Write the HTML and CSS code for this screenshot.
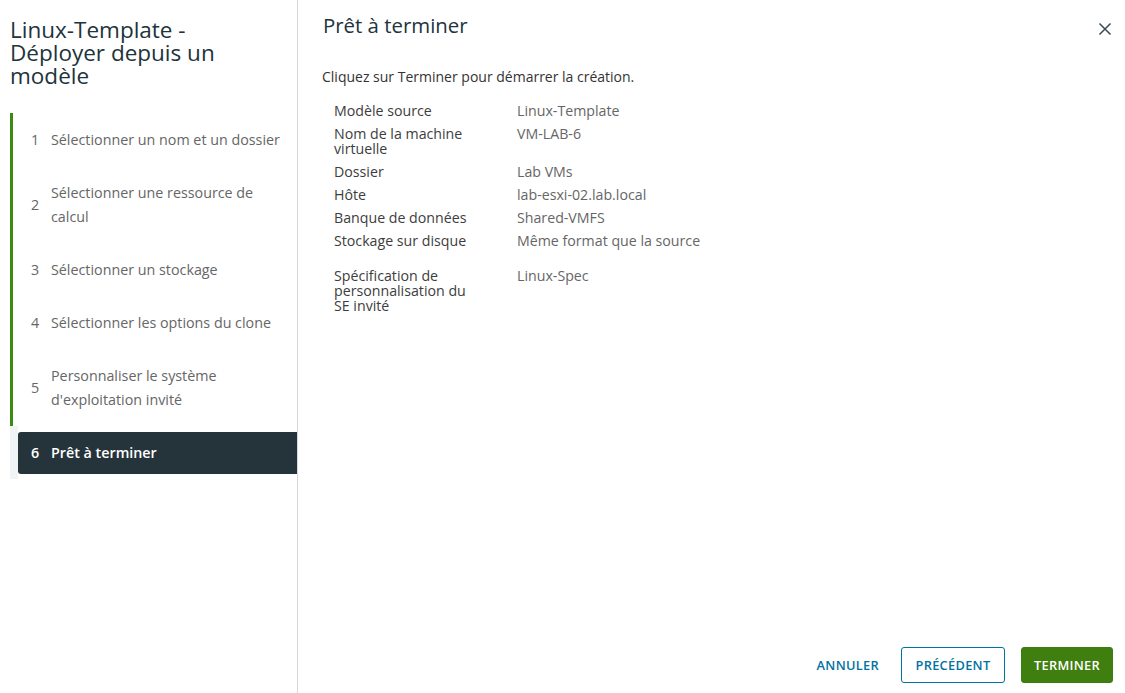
FILE: index.html
```html
<!DOCTYPE html>
<html lang="fr">
<head>
<meta charset="utf-8">
<title>Linux-Template - Déployer depuis un modèle</title>
<link rel="stylesheet" href="styles.css">
</head>
<body>
<div class="wizard">
  <aside class="sidebar">
    <h1 class="wiz-title">Linux-Template - Déployer depuis un modèle</h1>
    <ol class="steps">
      <li class="step done"><span class="num">1</span><span class="label">Sélectionner un nom et un dossier</span></li>
      <li class="step done"><span class="num">2</span><span class="label">Sélectionner une ressource de calcul</span></li>
      <li class="step done"><span class="num">3</span><span class="label">Sélectionner un stockage</span></li>
      <li class="step done"><span class="num">4</span><span class="label">Sélectionner les options du clone</span></li>
      <li class="step done"><span class="num">5</span><span class="label">Personnaliser le système d'exploitation invité</span></li>
      <li class="step current"><div class="current-box"><span class="num">6</span><span class="label">Prêt à terminer</span></div></li>
    </ol>
  </aside>
  <main class="content">
    <header class="content-head">
      <h2 class="page-title">Prêt à terminer</h2>
      <button class="close" aria-label="Fermer">
        <svg width="14" height="14" viewBox="0 0 14 14"><path d="M1.5 1.5 L12.5 12.5 M12.5 1.5 L1.5 12.5" stroke="#3a4a52" stroke-width="1.5" fill="none"/></svg>
      </button>
    </header>
    <p class="intro">Cliquez sur Terminer pour démarrer la création.</p>
    <dl class="summary">
      <dt>Modèle source</dt><dd>Linux-Template</dd>
      <dt>Nom de la machine virtuelle</dt><dd>VM-LAB-6</dd>
      <dt>Dossier</dt><dd>Lab VMs</dd>
      <dt>Hôte</dt><dd>lab-esxi-02.lab.local</dd>
      <dt>Banque de données</dt><dd>Shared-VMFS</dd>
      <dt>Stockage sur disque</dt><dd>Même format que la source</dd>
      <dt class="gap">Spécification de personnalisation du SE invité</dt><dd class="gap">Linux-Spec</dd>
    </dl>
    <footer class="actions">
      <button class="btn btn-link">ANNULER</button>
      <button class="btn btn-outline">PRÉCÉDENT</button>
      <button class="btn btn-primary">TERMINER</button>
    </footer>
  </main>
</div>
</body>
</html>
```
FILE: styles.css
```css
* { box-sizing: border-box; }
html, body { margin: 0; padding: 0; height: 100%; background: #fff; }
body { font-family: "Open Sans", "Noto Sans", sans-serif; color: #565656; }

.wizard { display: flex; height: 693px; }

.sidebar {
  width: 298px;
  flex: none;
  border-right: 1px solid #d7d7d7;
  padding: 18px 0 0 10px;
}
.wiz-title {
  margin: 0;
  font-weight: 400;
  font-size: 22.5px;
  line-height: 23px;
  color: #21333b;
  padding-right: 30px;
}
.steps { list-style: none; margin: 26px 0 0; padding: 0; }
.step { display: flex; align-items: center; font-size: 14.3px; line-height: 24px; color: #666; }
.step.done { border-left: 3px solid #3d8a10; padding: 15px 12px 14px 18px; }
.step.done .label { color: #666; }
.step .num { width: 20px; flex: none; }
.step.current { border-left: 8px solid #f1f4f4; padding: 6px 0 5px; }
.current-box {
  flex: 1;
  display: flex;
  align-items: center;
  height: 42px;
  background: #25343b;
  border-radius: 3px 0 0 3px;
  padding-left: 13px;
  color: #fff;
  font-weight: 600;
}

.content { flex: 1; display: flex; flex-direction: column; padding: 12px 12px 10px 24px; }
.content-head { display: flex; justify-content: space-between; align-items: flex-start; padding-left: 1px; }
.page-title { margin: 0; font-weight: 400; font-size: 20.4px; line-height: 26px; color: #21333b; }
.close { border: 0; background: none; padding: 0; margin: 10px 1px 0 0; width: 14px; height: 14px; cursor: pointer; }
.intro { margin: 29px 0 0; font-size: 14px; line-height: 20px; color: #333; }
.summary {
  display: grid;
  grid-template-columns: 183px 1fr;
  row-gap: 8px;
  margin: 16px 0 0 12px;
  font-size: 14.2px;
  line-height: 15px;
}
.summary dt { margin: 0; color: #3d3d3d; width: 140px; }
.summary dd { margin: 0; color: #666; }
.summary .gap { margin-top: 12px; }

.actions { margin-top: auto; display: flex; justify-content: flex-end; align-items: center; gap: 16px; }
.btn {
  height: 36px;
  font-family: inherit;
  font-size: 12.8px;
  font-weight: 600;
  letter-spacing: 0.3px;
  border-radius: 3px;
  padding: 0 12px;
  cursor: pointer;
}
.btn-link { border: 1px solid transparent; background: none; color: #0072a3; padding-right: 5px; }
.btn-outline { border: 1px solid #0072a3; background: #fff; color: #0072a3; width: 104px; }
.btn-primary { border: 1px solid #3c7c12; background: #3f7f0f; color: #fff; width: 92px; }
```
